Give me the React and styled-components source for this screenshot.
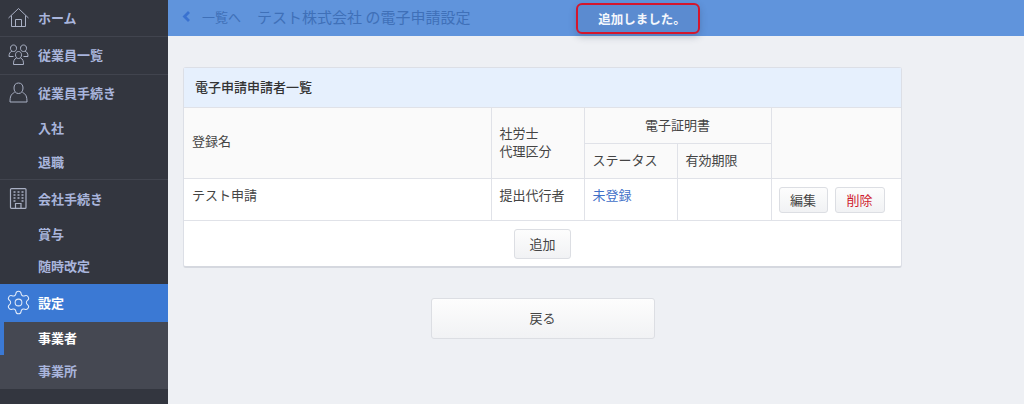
import React from 'react';
import styled, { createGlobalStyle } from 'styled-components';
import { Settings } from 'lucide-react';

const Global = createGlobalStyle`
  html, body { margin: 0; padding: 0; background: #eef0f4; }
  body { font-family: "Noto Sans CJK JP", "Noto Sans", sans-serif; font-size: 13px; color: #444; overflow: hidden; }
`;

const Page = styled.div`
  display: flex;
  width: 1024px;
  height: 404px;
  overflow: hidden;
`;

const Sidebar = styled.nav`
  width: 168px;
  flex: none;
  background: #33363f;
`;

const NavGroup = styled.div`
  border-bottom: ${props => props.$plain ? 'none' : '1px solid #41444e'};
`;

const NavItem = styled.div`
  display: flex;
  align-items: center;
  gap: 9px;
  box-sizing: border-box;
  height: ${props => props.$h || 37}px;
  padding: 0 0 2px 8px;
  background: ${props => props.$active ? '#3b79d4' : 'transparent'};
  color: ${props => props.$active ? '#fff' : '#a9b5dc'};
  font-size: 13px;
  font-weight: 700;
  svg { flex: none; width: 21px; height: 21px; }
`;

const GearIcon = styled(Settings)`
  && { width: 27px; height: 27px; margin: -4px -3px -4px -3px; }
`;

const SubItem = styled.div`
  display: flex;
  align-items: center;
  box-sizing: border-box;
  height: ${props => props.$h || 33}px;
  padding: 0 0 ${props => props.$lift ? 4 : 2}px 38px;
  color: ${props => props.$current ? '#fff' : '#a9b5dc'};
  font-size: 13px;
  font-weight: 700;
  box-shadow: ${props => props.$current ? 'inset 4px 0 0 #3b79d4' : 'none'};
`;

const SubPanel = styled.div`
  background: #454852;
`;

const Main = styled.main`
  flex: 1;
  position: relative;
`;

const TopBar = styled.header`
  display: flex;
  align-items: center;
  box-sizing: border-box;
  height: 36px;
  padding: 0 0 3px 14px;
  background: #6094dc;
  color: #3f70b8;
  font-size: 13px;
`;

const BackLink = styled.span`
  display: flex;
  align-items: center;
  gap: 11px;
  margin-right: 16px;
  svg { width: 9px; height: 11px; }
`;

const PageTitle = styled.span`
  font-size: 15px;
`;

const Toast = styled.div`
  position: absolute;
  left: 408px;
  top: 3px;
  box-sizing: border-box;
  width: 124px;
  height: 31px;
  display: flex;
  align-items: center;
  justify-content: center;
  padding: 0 0 0 8px;
  border: 2px solid #d4162c;
  border-radius: 6px;
  background: #5b8bd0;
  box-shadow: 0 3px 7px rgba(40, 50, 80, 0.25);
  color: #f4f7fc;
  font-size: 12.5px;
  font-weight: 700;
`;

const Content = styled.div`
  padding: 31px 0 0 15px;
`;

const Card = styled.section`
  box-sizing: border-box;
  width: 719px;
  background: #fff;
  border: 1px solid #dcdfe6;
  border-bottom: 2px solid #d5d8df;
  border-radius: 3px;
`;

const CardTitle = styled.h2`
  margin: 0;
  display: flex;
  align-items: center;
  box-sizing: border-box;
  height: 39px;
  padding: 0 0 2px 11px;
  background: #e6f0fd;
  color: #333;
  font-size: 13px;
  font-weight: 500;
`;

const Table = styled.table`
  width: 717px;
  border-collapse: collapse;
  table-layout: fixed;
`;

const Th = styled.th`
  padding: 0 8px ${props => props.$lift ? 4 : 2}px;
  background: #fafafa;
  border: 1px solid #e0e2e8;
  color: #444;
  font-size: 13px;
  font-weight: 400;
  line-height: 18px;
  text-align: ${props => props.$center ? 'center' : 'left'};
  &:first-child { border-left: none; }
  &:last-child { border-right: none; }
`;

const Td = styled.td`
  padding: ${props => props.$pad || '6px 8px 0'};
  height: 41px;
  box-sizing: border-box;
  border: 1px solid #e0e2e8;
  font-size: 13px;
  line-height: 20px;
  vertical-align: top;
  &:first-child { border-left: none; }
  &:last-child { border-right: none; }
`;

const StatusLink = styled.a`
  color: #3f70c8;
`;

const Actions = styled.div`
  display: flex;
  gap: 7px;
`;

const Button = styled.button`
  box-sizing: border-box;
  width: ${props => props.$w}px;
  height: ${props => props.$h}px;
  padding: 0 0 2px;
  border: 1px solid #dcdee3;
  border-radius: 3px;
  background: linear-gradient(#fdfdfd, #f1f2f4);
  color: ${props => props.$danger ? '#cf1c30' : '#444'};
  font-family: inherit;
  font-size: 13px;
`;

const AddRow = styled.div`
  display: flex;
  justify-content: center;
  padding: 8px 0 7px;
`;

const BackRow = styled.div`
  display: flex;
  justify-content: center;
  width: 719px;
  margin-top: 30px;
`;

const HomeIcon = () => (
  <svg viewBox="0 0 21 21" fill="none" stroke="#a9b0c4" strokeWidth="1">
    <path d="M0.5 11 10.5 1.5 20.5 11M3.5 8.5V19.5H17.5V8.5M7.5 19.5V12.5H13.5V19.5" />
  </svg>
);

const PeopleIcon = () => (
  <svg viewBox="0 0 21 21" fill="none" stroke="#a9b0c4" strokeWidth="1">
    <path d="M5.5 1C3.5 1 2.5 2.5 2.5 4.2C2.5 6.2 3.5 7.5 5.5 7.5S8.5 6.2 8.5 4.2C8.5 2.5 7.5 1 5.5 1Z" />
    <path d="M15.5 1C13.5 1 12.5 2.5 12.5 4.2C12.5 6.2 13.5 7.5 15.5 7.5S18.5 6.2 18.5 4.2C18.5 2.5 17.5 1 15.5 1Z" />
    <path d="M4 7C2 8 1 9.5 1 12.5H5.5M17 7C19 8 20 9.5 20 12.5H15.5" />
    <path d="M10.5 7.5C8.5 7.5 7.5 9 7.5 10.8C7.5 12.8 8.5 14.5 10.5 14.5S13.5 12.8 13.5 10.8C13.5 9 12.5 7.5 10.5 7.5Z" />
    <path d="M8.5 14C6 15 5.5 17 5.5 20.5H15.5C15.5 17 15 15 12.5 14" />
  </svg>
);

const PersonIcon = () => (
  <svg viewBox="0 0 21 21" fill="none" stroke="#a9b0c4" strokeWidth="1">
    <path d="M10.5 1C7.5 1 6 3 6 6C6 9 7.5 11.5 10.5 11.5S15 9 15 6C15 3 13.5 1 10.5 1Z" />
    <path d="M6.5 10.5C3 12 2 14.5 2 20H19C19 14.5 18 12 14.5 10.5" />
  </svg>
);

const BuildingIcon = () => (
  <svg viewBox="0 0 21 21" fill="none" stroke="#a9b0c4" strokeWidth="1.2">
    <rect x="2.5" y="0.6" width="15.5" height="19.8" rx="1" />
    <path d="M5.5 4H7.5M9.5 4H11.5M13.5 4H15.5M5.5 7H7.5M9.5 7H11.5M13.5 7H15.5M5.5 10H7.5M9.5 10H11.5M13.5 10H15.5M5.5 13H7.5M13.5 13H15.5" strokeWidth="1.6" />
    <path d="M7.5 20.5V15.5H13V20.5" />
  </svg>
);

const Chevron = () => (
  <svg viewBox="0 0 9 11" fill="none" stroke="#3a72d0" strokeWidth="2.8">
    <path d="M7 1 2.5 5.5 7 10" />
  </svg>
);

export default function App() {
  return (
    <>
      <Global />
      <Page>
        <Sidebar>
          <NavGroup>
            <NavItem $h={36}><HomeIcon />ホーム</NavItem>
          </NavGroup>
          <NavGroup>
            <NavItem><PeopleIcon />従業員一覧</NavItem>
          </NavGroup>
          <NavGroup>
            <NavItem><PersonIcon />従業員手続き</NavItem>
            <SubItem>入社</SubItem>
            <SubItem $h={34}>退職</SubItem>
          </NavGroup>
          <NavGroup $plain>
            <NavItem $h={38}><BuildingIcon />会社手続き</NavItem>
            <SubItem>賞与</SubItem>
            <SubItem $lift>随時改定</SubItem>
          </NavGroup>
          <NavItem $active $h={38}>
            <GearIcon color="#e2ebf9" strokeWidth={0.9} />
            設定
          </NavItem>
          <SubPanel>
            <SubItem $current>事業者</SubItem>
            <SubItem $h={34} $lift>事業所</SubItem>
          </SubPanel>
        </Sidebar>
        <Main>
          <TopBar>
            <BackLink><Chevron />一覧へ</BackLink>
            <PageTitle>テスト株式会社 の電子申請設定</PageTitle>
          </TopBar>
          <Toast>追加しました。</Toast>
          <Content>
            <Card>
              <CardTitle>電子申請申請者一覧</CardTitle>
              <Table>
                <colgroup>
                  <col style={{ width: 307 }} />
                  <col style={{ width: 93 }} />
                  <col style={{ width: 93 }} />
                  <col style={{ width: 94 }} />
                  <col />
                </colgroup>
                <thead>
                  <tr style={{ height: 36 }}>
                    <Th rowSpan={2} $lift>登録名</Th>
                    <Th rowSpan={2}>社労士<br />代理区分</Th>
                    <Th colSpan={2} $center>電子証明書</Th>
                    <Th rowSpan={2} />
                  </tr>
                  <tr style={{ height: 35 }}>
                    <Th>ステータス</Th>
                    <Th>有効期限</Th>
                  </tr>
                </thead>
                <tbody>
                  <tr style={{ height: 42 }}>
                    <Td>テスト申請</Td>
                    <Td>提出代行者</Td>
                    <Td><StatusLink>未登録</StatusLink></Td>
                    <Td />
                    <Td $pad="8px 0 0 7px">
                      <Actions>
                        <Button $w={49} $h={26}>編集</Button>
                        <Button $w={50} $h={26} $danger>削除</Button>
                      </Actions>
                    </Td>
                  </tr>
                </tbody>
              </Table>
              <AddRow>
                <Button $w={57} $h={30}>追加</Button>
              </AddRow>
            </Card>
            <BackRow>
              <Button $w={224} $h={41}>戻る</Button>
            </BackRow>
          </Content>
        </Main>
      </Page>
    </>
  );
}
